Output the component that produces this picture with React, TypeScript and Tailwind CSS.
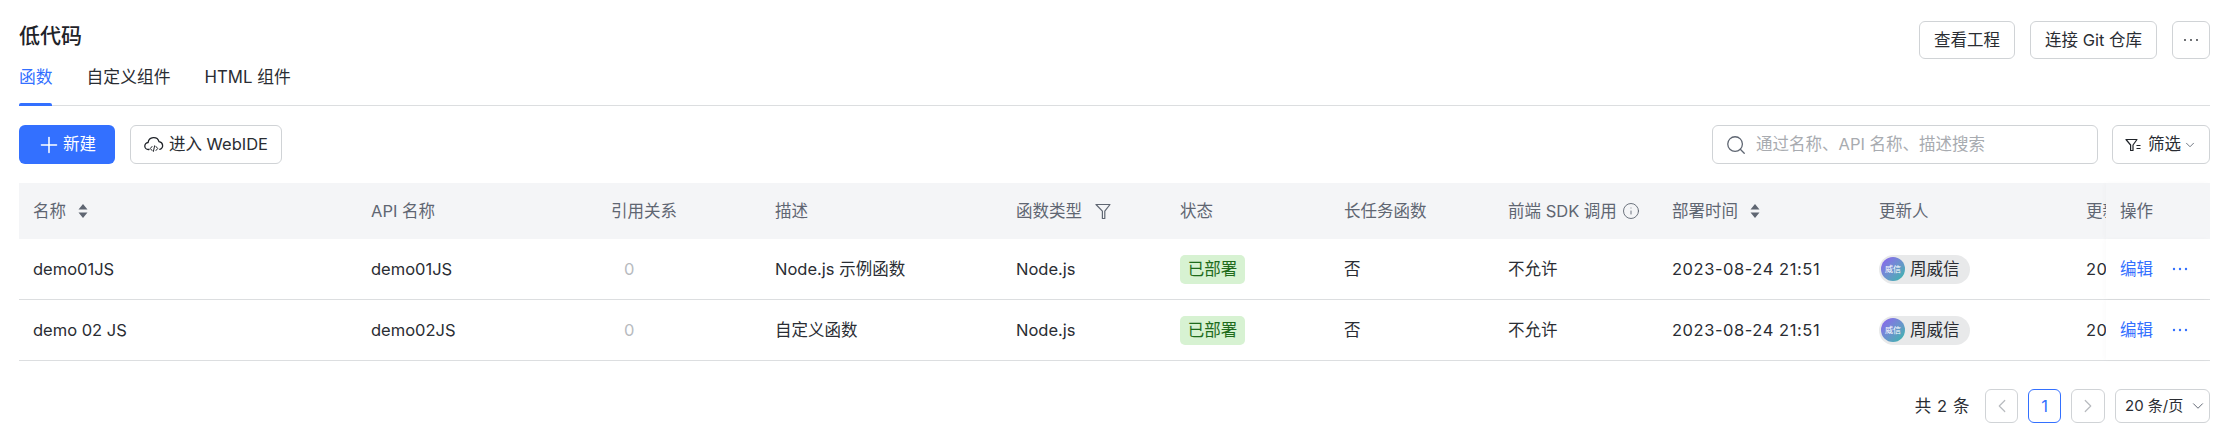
import { ChevronDown, ChevronLeft, ChevronRight, Info, Plus, Search } from "lucide-react";
import { ReactNode } from "react";

const gridCols =
  "grid grid-cols-[338px_240px_164px_241px_164px_164px_164px_164px_207px_207px_34px_104px]";

const rows = [
  { name: "demo01JS", api: "demo01JS", desc: "Node.js 示例函数" },
  { name: "demo 02 JS", api: "demo02JS", desc: "自定义函数" },
];

const SortIcon = () => (
  <svg width="10" height="16" viewBox="0 0 10 16" className="shrink-0 text-[#5f6672]">
    <path d="M5 1 9.5 6.5H.5z M5 15 .5 9.5h9z" fill="currentColor" />
  </svg>
);

const FunnelIcon = () => (
  <svg width="16" height="17" viewBox="0 0 16 17" fill="none" stroke="#5f6672" strokeWidth="1.2" className="shrink-0">
    <path d="M1 1.5h14L9.8 8.2v7.3H7.4V8.2z" strokeLinejoin="round" />
  </svg>
);

const FilterLinesIcon = () => (
  <svg width="18" height="16" viewBox="0 0 18 16" fill="none" stroke="#1f2329" strokeWidth="1.2" className="shrink-0">
    <path d="M1 2.5h11L8 8v5.5H5.6V8z" strokeLinejoin="round" />
    <path d="M11.5 8.5h4M11.5 11.5h4" />
  </svg>
);

const CloudCodeIcon = () => (
  <svg width="20" height="18" viewBox="0 0 20 18" fill="none" stroke="#1f2329" strokeWidth="1.3" className="shrink-0">
    <path d="M5 13.5H4.5a3.5 3.5 0 0 1-.4-7A5.6 5.6 0 0 1 15 5.6a4 4 0 0 1 .8 7.8" strokeLinecap="round" />
    <path d="M8 10.5 6.3 12.5 8 14.5M12 10.5l1.7 2-1.7 2M10.6 9.8 9.4 15.4" strokeLinecap="round" strokeLinejoin="round" strokeWidth="1" />
  </svg>
);

const DotsIcon = ({ className, r = 1.2 }: { className: string; r?: number }) => (
  <svg width="16" height="4" viewBox="0 0 16 4" className={className}>
    <circle cx="2" cy="2" r={r} fill="currentColor" />
    <circle cx="8" cy="2" r={r} fill="currentColor" />
    <circle cx="14" cy="2" r={r} fill="currentColor" />
  </svg>
);

const OutlineButton = ({ children, className }: { children: ReactNode; className: string }) => (
  <button className={`flex items-center justify-center rounded-[6px] border border-[#d0d3d6] bg-white text-[16.5px] text-[#2a2d33] ${className}`}>
    {children}
  </button>
);

const HeadCell = ({ children, className = "" }: { children?: ReactNode; className?: string }) => (
  <div className={`flex h-[56px] items-center overflow-hidden whitespace-nowrap pl-[14px] text-[16.5px] text-[#5f6672] ${className}`}>
    {children}
  </div>
);

const BodyCell = ({ children, className = "" }: { children?: ReactNode; className?: string }) => (
  <div className={`flex items-center overflow-hidden whitespace-nowrap pl-[14px] text-[16.5px] text-[#2a2d33] ${className}`}>
    {children}
  </div>
);

const Row = ({ name, api, desc }: { name: string; api: string; desc: string }) => (
  <div className={`${gridCols} h-[61px] border-b border-[#dcdee0]`}>
    <BodyCell>{name}</BodyCell>
    <BodyCell>{api}</BodyCell>
    <BodyCell className="text-[#b8bbbf]">
      <span className="pl-[13px]">0</span>
    </BodyCell>
    <BodyCell>{desc}</BodyCell>
    <BodyCell>Node.js</BodyCell>
    <BodyCell>
      <span className="flex h-[29px] w-[65px] items-center justify-center rounded-[5px] bg-[#d7f2d2] text-[#1f6b1c]">已部署</span>
    </BodyCell>
    <BodyCell>否</BodyCell>
    <BodyCell>不允许</BodyCell>
    <BodyCell className="tracking-[0.55px]">2023-08-24 21:51</BodyCell>
    <BodyCell>
      <span className="flex h-[29px] w-[91px] items-center gap-[5px] rounded-full bg-[#e8e9ea] pl-[2px]">
        <span className="flex size-[24px] items-center justify-center rounded-full bg-gradient-to-br from-[#8b5cf0] to-[#22b8a8] text-[8px] text-white">
          威信
        </span>
        周威信
      </span>
    </BodyCell>
    <BodyCell className="tracking-[0.55px]">2023-08-24 21:51</BodyCell>
    <BodyCell className="bg-white shadow-[-2px_0_4px_rgba(0,0,0,0.02)]">
      <span className="text-[#3370ff]">编辑</span>
      <DotsIcon className="ml-[19px] text-[#3370ff]" />
    </BodyCell>
  </div>
);

export default function App() {
  return (
    <div className="h-[439px] w-[2231px] overflow-hidden bg-white pl-[19px] pr-[21px] font-['Inter','Noto_Sans_CJK_SC',sans-serif]">
      <div className="relative flex h-[106px] flex-col border-b border-[#dcdee0]">
        <h1 className="mt-[22px] text-[21px] font-medium leading-[28px] text-[#1f2329]">低代码</h1>
        <div className="mt-[15px] flex gap-[34px] text-[16.8px] leading-[24px] text-[#2a2d33]">
          <span className="text-[#3370ff]">函数</span>
          <span>自定义组件</span>
          <span>HTML 组件</span>
        </div>
        <span className="absolute bottom-[-1px] left-0 h-[3px] w-[33px] rounded-t-[2px] bg-[#3370ff]" />
        <div className="absolute right-0 top-[21px] flex gap-[15px]">
          <OutlineButton className="h-[38px] w-[96px]">查看工程</OutlineButton>
          <OutlineButton className="h-[38px] w-[127px]">连接 Git 仓库</OutlineButton>
          <OutlineButton className="h-[38px] w-[38px]">
            <DotsIcon className="text-[#2a2d33]" r={0.9} />
          </OutlineButton>
        </div>
      </div>

      <div className="mt-[19px] flex h-[39px] items-center">
        <button className="flex h-[39px] w-[96px] items-center justify-center gap-[1px] rounded-[6px] bg-[#3370ff] pr-[2px] text-[16.5px] text-white">
          <Plus size={26} strokeWidth={1.4} />
          新建
        </button>
        <OutlineButton className="ml-[15px] h-[39px] w-[152px] gap-[5px]">
          <CloudCodeIcon />
          进入 WebIDE
        </OutlineButton>
        <div className="ml-auto flex h-[39px] w-[386px] items-center gap-[9px] rounded-[6px] border border-[#d0d3d6] pl-[12px] text-[16.5px] text-[#a8abb0]">
          <Search size={22} strokeWidth={1.4} className="text-[#5f6672]" />
          通过名称、API 名称、描述搜索
        </div>
        <OutlineButton className="ml-[14px] h-[39px] w-[98px] gap-[5px]">
          <FilterLinesIcon />
          筛选
          <ChevronDown size={14} strokeWidth={1.5} className="-ml-[3px] text-[#5f6672]" />
        </OutlineButton>
      </div>

      <div className="mt-[19px]">
        <div className={`${gridCols} bg-[#f4f5f7]`}>
          <HeadCell className="gap-[12px]">
            名称
            <SortIcon />
          </HeadCell>
          <HeadCell>API 名称</HeadCell>
          <HeadCell>引用关系</HeadCell>
          <HeadCell>描述</HeadCell>
          <HeadCell className="gap-[13px]">
            函数类型
            <FunnelIcon />
          </HeadCell>
          <HeadCell>状态</HeadCell>
          <HeadCell>长任务函数</HeadCell>
          <HeadCell className="gap-[5px]">
            前端 SDK 调用
            <Info size={18} strokeWidth={1.2} className="shrink-0" />
          </HeadCell>
          <HeadCell className="gap-[12px]">
            部署时间
            <SortIcon />
          </HeadCell>
          <HeadCell>更新人</HeadCell>
          <HeadCell>更新时间</HeadCell>
          <HeadCell className="bg-[#f4f5f7] shadow-[-2px_0_4px_rgba(0,0,0,0.02)]">操作</HeadCell>
        </div>
        {rows.map((row) => (
          <Row key={row.name} {...row} />
        ))}
      </div>

      <div className="mt-[28px] flex h-[34px] items-center justify-end text-[16.5px] text-[#2a2d33]">
        <span className="tracking-[0.6px]">共 2 条</span>
        <span className="ml-[15px] flex h-[34px] w-[33px] items-center justify-center rounded-[6px] border border-[#d0d3d6] text-[#b8bbbf]">
          <ChevronLeft size={22} strokeWidth={1.3} />
        </span>
        <span className="ml-[10px] flex h-[34px] w-[33px] items-center justify-center rounded-[6px] border border-[#3370ff] text-[#3370ff]">1</span>
        <span className="ml-[10px] flex h-[34px] w-[34px] items-center justify-center rounded-[6px] border border-[#d0d3d6] text-[#b8bbbf]">
          <ChevronRight size={22} strokeWidth={1.3} />
        </span>
        <span className="ml-[10px] flex h-[34px] w-[95px] items-center gap-[6px] rounded-[6px] border border-[#d0d3d6] pl-[9px] text-[15px]">
          20 条/页
          <ChevronDown size={18} strokeWidth={1.3} className="text-[#5f6672]" />
        </span>
      </div>
    </div>
  );
}
